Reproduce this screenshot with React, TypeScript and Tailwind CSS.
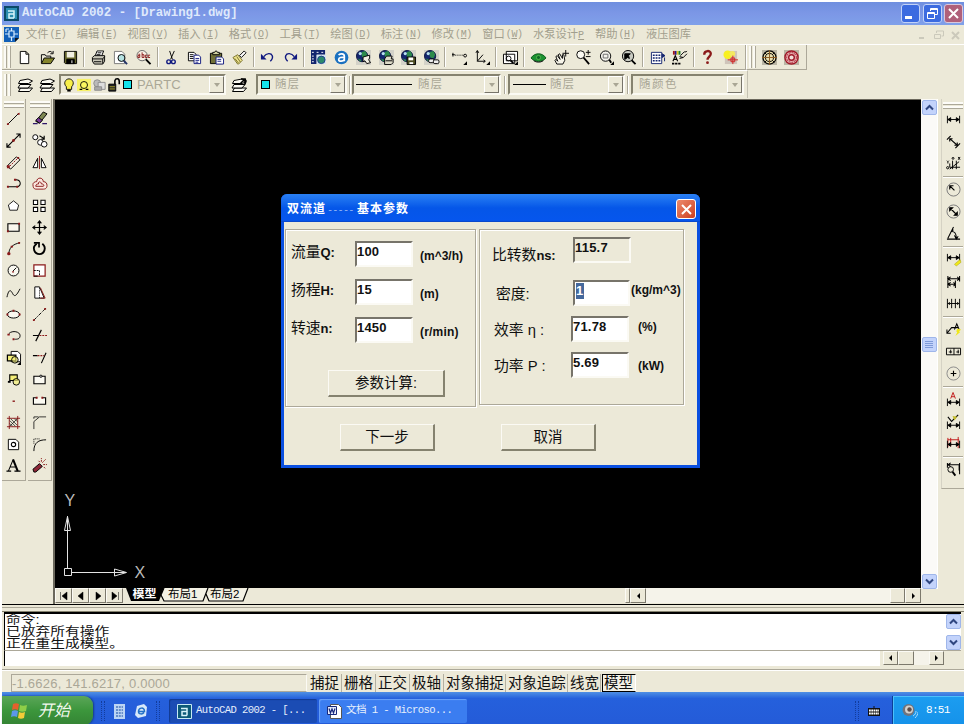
import type { ReactNode } from 'react';
import clsx from 'clsx';

const SONG = "font-['Liberation_Mono','Noto_Sans_CJK_SC',monospace]";
const HEI = "font-['Liberation_Sans','Noto_Sans_CJK_SC',sans-serif]";

function Icon({ children, size = 16 }: { children: ReactNode; size?: number }) {
  return (
    <svg
      width={size}
      height={size}
      viewBox="0 0 16 16"
      fill="none"
      stroke="#000"
      strokeWidth="1"
      className="shrink-0 overflow-visible"
    >
      {children}
    </svg>
  );
}

const R = '#8b1a1a';

// small filled corner marking a flyout button
const Flyout = () => <path d="M16 12v4h-4z" fill="#000" stroke="none" />;

const Globe = () => (
  <>
    <path d="M0 0h16v16h-16z" fill="#d3d2c8" stroke="none" />
    <circle cx="6.5" cy="6.5" r="6" fill="#14266e" stroke="#0c1640" />
    <path d="M6 2l4-1 2 4-2 4-3-1-1-2zM2 9l3 1 1 2-2 0z" fill="#2c8a4c" stroke="none" />
    <circle cx="4.5" cy="3.8" r="1.7" fill="#b8e0f0" stroke="none" />
  </>
);

const standardGroups: ReactNode[][] = [
  [
    <path d="M3.5 1.5h6l3 3v10h-9zM9.5 1.5v3h3" fill="#fff" />,
    <>
      <path d="M1.5 14v-9h4l1 1.5h5v2M8 3c2-2 4-2 5 0M14 1v3h-3" />
      <path d="M1.5 14.5l3-6h11l-4 6z" fill="#84842c" />
    </>,
    <>
      <path d="M1.5 1.5h13v13h-12l-1-1z" fill="#66662c" />
      <path d="M4 2h8v6h-8z" fill="#f2f0e2" stroke="none" />
      <path d="M4 10h8v4.5h-8z" fill="#000" />
      <path d="M9.5 11v3" stroke="#fff" />
    </>,
  ],
  [
    <>
      <path d="M4.5 6l2-5h7l-2 5" fill="#fff" />
      <path d="M1.5 8l2-2h11v6l-2 3h-9l-2-3z" fill="#c9c7b8" />
      <path d="M1.5 9.5h11v5M3 12.5h8M7 3h4M6 5h4M12.5 9.5l2-2.5" />
    </>,
    <>
      <path d="M1.5 1.5h8l3 3v10h-11z" fill="#fff" stroke="#777" />
      <circle cx="9" cy="8.5" r="3.7" fill="#b5e2e2" />
      <path d="M11.5 11.5l3.5 3.5" strokeWidth="2" stroke="#236" />
    </>,
    <>
      <circle cx="6.5" cy="6" r="5.5" fill="#f8f0e4" stroke="#666" />
      <path d="M10.5 10l5 5" strokeWidth="2" />
      <path d="M2.5 4.500h1.500v3.500h-2v-2h2M6.500 2.500v5.500h2v-3h-2M12 5.500h-2v2.500h2M15 5.500h-2v2.500h2" stroke={R} />
    </>,
  ],
  [
    <>
      <path d="M6 1l3 9M11 1l-4 9" />
      <circle cx="5" cy="12.5" r="2" stroke="#111a80" strokeWidth="1.5" />
      <circle cx="10" cy="12.5" r="2" stroke="#111a80" strokeWidth="1.5" />
    </>,
    <>
      <path d="M1.5 2.5h6l2 2v7h-8z" fill="#fff" />
      <path d="M3 5h4M3 7h4M3 9h4" />
      <path d="M7.5 5.5h5l2 2v7h-7z" fill="#fff" stroke="#111a80" />
      <path d="M9 9h4M9 11h4M9 13h3" stroke="#111a80" />
    </>,
    <>
      <path d="M1.5 3.5h12v11h-12z" fill="#707038" />
      <path d="M4 2.5h2l1-1.5h1l1 1.5h2v2.5h-7z" fill="#cfcfa0" />
      <path d="M7.5 7.5h6l2 2v5.5h-8z" fill="#fff" stroke="#111a80" />
      <path d="M9 10h4M9 12h4" stroke="#111a80" />
    </>,
    <>
      <path d="M1 8l5-3 5 6-4 4h-1z" fill="#efe58e" stroke="#77702a" />
      <path d="M3 9l4 5M5 7l4 6" stroke="#77702a" />
      <path d="M8 6l5-5 2 2-5 5z" fill="#fff" />
    </>,
  ],
  [
    <>
      <path d="M4 7c3-4 8-4 9-1c1 2 0 4-2 6" stroke="#111a80" strokeWidth="1.5" />
      <path d="M1 4v6h6z" fill="#111a80" stroke="none" />
    </>,
    <>
      <path d="M12 7c-3-4-8-4-9-1c-1 2 0 4 2 6" stroke="#111a80" strokeWidth="1.5" />
      <path d="M15 4v6h-6z" fill="#111a80" stroke="none" />
    </>,
  ],
  [
    <>
      <path d="M0 0h15v5h-9v10h-6z" fill="#13246e" stroke="none" />
      <path d="M1 2.5h3M6 2.5h3M1 6.5h3M1 9.5h3M1 12.5h3M11 2.5h3" stroke="#fff" strokeDasharray="2 1" />
      <path d="M6 5h10v10h-10z" fill="#d4e4f0" stroke="none" />
      <circle cx="11" cy="10.5" r="4" fill="#2c8a6c" stroke="#1d3d8c" />
    </>,
    <>
      <circle cx="8" cy="8" r="7.3" fill="#1a71c0" stroke="none" />
      <path d="M5 5.500c1-2 6-2 6 1v5.500M11 8c-3-.5-6 0-6 2c0 2.500 5 2.500 6 0" stroke="#fff" strokeWidth="1.800" />
    </>,
    <>
      <Globe />
      <path d="M7.5 7.5l7-2v3l-1 2 2 3-4 1-2-3-2 1z" fill="#f1efe2" />
    </>,
    <>
      <Globe />
      <path d="M6 9.5l2-3h6l-1 3h2v4l-2 2h-7z" fill="#dddbc8" />
      <path d="M7 11.5h7" />
    </>,
    <>
      <Globe />
      <path d="M6.5 7.5h9v8h-9z" fill="#4c4c20" />
      <path d="M8 8h5v3h-5z" fill="#fff" stroke="none" />
      <path d="M9 13h4v2h-4z" fill="#fff" stroke="none" />
    </>,
    <>
      <Globe />
      <rect x="5" y="9.5" width="6" height="4" rx="1.5" fill="#eee" />
      <rect x="10" y="10.5" width="6" height="4" rx="1.5" fill="#eee" />
    </>,
  ],
  [
    <>
      <path d="M1 3v4M0 5h3" />
      <path d="M3 5.5h9" strokeDasharray="1 1" />
      <circle cx="14" cy="6" r="1.5" />
      <Flyout />
    </>,
    <>
      <path d="M2.5 1v11h8M2.5 12l6-7M1 3l1.5-2.5 1.5 2.5M9 10.5l2 1.5-2 1.5" />
      <Flyout />
    </>,
  ],
  [
    <>
      <path d="M3.5 1.5h12v10h-12zM.5 4.5h12v10h-12z" fill="#fff" />
      <circle cx="6" cy="9" r="2.5" />
      <path d="M8 11l3 3" strokeWidth="2" />
      <Flyout />
    </>,
  ],
  [
    <>
      <path d="M0 8.5c4-6 12-6 16 0c-4 5-12 5-16 0z" fill="#1c9232" stroke="#0b5818" />
      <path d="M3 11.500c3 2 7 2 10 0" stroke="#111" />
      <circle cx="8" cy="8" r="2.200" fill="#0d6a24" stroke="#7fd060" strokeWidth=".6" />
    </>,
    <>
      <path d="M3 15l-2-4 1-1 2 2-2-5 1.5-1 3 4-2-5 1.5-1 3 5 0-4 1.5 0 1 6-2 4z" fill="#f7f5ea" />
      <path d="M12.5 0v7M9 3.5h7" />
    </>,
    <>
      <circle cx="5" cy="5" r="4.200" fill="#fbfaf2" />
      <path d="M8 8l6 7" strokeWidth="2" />
      <path d="M13 0v5M10.500 2.500h5M10.500 7h5" />
    </>,
    <>
      <circle cx="7" cy="6.5" r="5.5" fill="#f4f3ec" />
      <path d="M4.5 4.5h5v4h-5z" stroke="#666" />
      <path d="M11 10.500l2 3" strokeWidth="2" />
      <Flyout />
    </>,
    <>
      <circle cx="7.5" cy="6.5" r="6" fill="#c9cbc2" />
      <path d="M4 10v-6l6 0-2 2 1 3-2-1z" fill="#000" />
      <path d="M11.500 11l4 4" strokeWidth="2" />
    </>,
  ],
  [
    <>
      <path d="M1.5 2.5h11v12h-11z" fill="#fff" stroke="#13246e" />
      <path d="M3 5.5h8M3 8.5h8M3 11.5h8" stroke="#13246e" strokeWidth="1.600" strokeDasharray="2 1" />
      <path d="M13 4l3 2-3 2zM15.5 8v4" fill="#13246e" stroke="#13246e" />
    </>,
    <>
      <path d="M1 1h2v4h-2z" fill="#a01616" stroke="none" />
      <path d="M3 1h2v4h-2z" fill="#2a1690" stroke="none" />
      <path d="M5 1h2v4h-2z" fill="#d8c820" stroke="none" />
      <path d="M7 1h2v4h-2z" fill="#1b7b2c" stroke="none" />
      <path d="M1 12l2.500-6 2.500 6M2 10h3.500" strokeWidth="1.200" />
      <path d="M9 6l4-4 2 0 1-1M8 9l4-1 4-4M8 7l4 1" />
      <path d="M0 14.5h9" strokeWidth="2" strokeDasharray="2.500 .8" />
    </>,
  ],
  [
    <>
      <path d="M4.5 5c0-5 7-5 7-1c0 3-3.5 3-3.5 6.5" stroke={R} strokeWidth="2.5" />
      <circle cx="8" cy="13.5" r="1.5" fill={R} stroke="none" />
    </>,
    <>
      <path d="M2 1h13v14h-13z" fill="#cfc5ba" stroke="none" />
      <circle cx="5" cy="5" r="4.5" fill="#f8f020" stroke="none" />
      <circle cx="10" cy="4" r="3" fill="#f4e860" stroke="none" />
      <path d="M8.5 8.5h4v4h-4zM10.5 6v9M5 10.5h11" stroke="#d02020" />
    </>,
  ],
];

const drawIcons: ReactNode[] = [
  <>
    <path d="M2 14l12-12" />
    <path d="M1 13h2v2h-2zM12.5 2h2v2h-2z" fill={R} stroke="none" />
  </>,
  <>
    <path d="M1 15l14-14M1 11v4h4M11 1h4v4" strokeWidth="1.2" />
    <circle cx="8" cy="8" r="1.5" fill={R} stroke="none" />
  </>,
  <>
    <path d="M1 12l10-10 4 3-10 10z" fill="#f3ede0" />
    <path d="M4 12l8-8" stroke={R} strokeDasharray="2 1" />
    <path d="M1 11h3v3h-3zM12 2h2v2h-2z" fill={R} stroke="none" />
  </>,
  <>
    <path d="M2 11.500h10c5-1 4-8-2-7.500" strokeWidth="1.1" />
    <path d="M1 10.500h2v2h-2zM11 10.500h2v2h-2zM8.500 3h2.500v2h-2.500z" fill={R} stroke="none" />
  </>,
  <path d="M8 3l5.5 4.500-1.5 5.500h-8l-1.500-5.500z" fill="#fff" strokeWidth=".9" />,
  <>
    <path d="M2 4h12v8h-12z" fill="#faf7ee" strokeWidth="1.2" />
    <path d="M1 11h2v2h-2zM13 3h2v2h-2z" fill={R} stroke="none" />
  </>,
  <>
    <path d="M3 14c0-6 4-11 12-12" />
    <circle cx="3" cy="13.5" r="1.8" fill={R} stroke="none" />
    <path d="M5 5h2.5v2h-2.5zM13 1h2v2h-2z" fill={R} stroke="none" />
  </>,
  <>
    <circle cx="8" cy="8" r="5.8" fill="#f8f7ef" />
    <path d="M6.5 9.5h2" stroke={R} strokeWidth="1.500" />
    <path d="M7.500 8.500l3.500-3.500" />
  </>,
  <path d="M1 13c2-9 4-8 6-4s4 3 8-5" />,
  <>
    <ellipse cx="8" cy="8" rx="6.5" ry="3.8" fill="#faf8f0" />
    <path d="M.5 7h2v2h-2zM7 3h2v2h-2zM13.5 7h2v2h-2z" fill={R} stroke="none" />
  </>,
  <>
    <path d="M3 6c4-4 12-2 12 2s-3 4-6 4" />
    <path d="M1.5 6h2.5v2h-2.5zM7 11h2v2h-2z" fill={R} stroke="none" />
  </>,
  <>
    <path d="M5.5 1.5h7l3 3v8h-10z" fill="#fff" />
    <path d="M1.5 5.5h9v6h-9z" fill="#f4ee78" strokeWidth="1.3" />
    <circle cx="9.500" cy="10.500" r="3.500" fill="#f4ee78" fillOpacity=".6" />
    <Flyout />
  </>,
  <>
    <path d="M4 3h8v6h-8z" fill="#f4ee78" strokeWidth="1.2" />
    <circle cx="11" cy="10.5" r="3.5" fill="#f4ee78" fillOpacity=".7" />
    <path d="M2 10.5h3" strokeWidth="2" />
  </>,
  <path d="M7 8h2.5v1.5h-2.5z" fill={R} stroke="none" />,
  <>
    <path d="M1 3.5h14M1 12.5h14M3.5 1v14M12.5 1v14" stroke={R} />
    <path d="M4 6l6 6M4 9l3 3M5 4l7 7M9 4l3 3M4 12l8-8" strokeWidth=".7" />
  </>,
  <>
    <path d="M2.5 2.5h8l3 3v8h-11z" fill="#fff" />
    <circle cx="8" cy="8" r="2.3" strokeWidth="1.2" />
  </>,
  <>
    <path d="M2.500 14l5-12M4 9.500h6M.5 14h5M9 14h6.500" strokeWidth="1.100" />
    <path d="M7.500 1.500l5 12.500" strokeWidth="2.200" />
  </>,
];

const modifyIcons: ReactNode[] = [
  <>
    <path d="M4 11l8-10 4 2-8 10z" fill="#7d8750" />
    <path d="M4 10l3-3 4 3-3 3z" fill="#7b3c9a" />
    <path d="M1 13.5h5M11 13.5h5" stroke="#31186a" strokeWidth="1.5" />
  </>,
  <>
    <circle cx="3.5" cy="4.5" r="2.7" fill="#fff" />
    <circle cx="9" cy="10" r="3" fill="#fff" />
    <circle cx="13" cy="12" r="3" fill="#fff" />
    <path d="M8 3l5 3M13 3v3.5h-3" strokeWidth="1.2" />
  </>,
  <>
    <path d="M1 13.5h5v-10zM10 13.5h5l-5-10z" fill="#fff" />
    <path d="M8 1v14" stroke={R} />
  </>,
  <>
    <path d="M1 9c0-2 2-3 4-3c0-5 7-5 7 0c3 0 4 2 4 4c0 4-3 4-4 4h-8c-2 0-3-2-3-5z" fill="#fbe8e0" stroke={R} />
    <path d="M4 11c0-2.500 2-2.500 3-2.500c-1-3 3-3 3 0c3-.5 3 2.500 2 2.500z" stroke={R} />
  </>,
  <path d="M1.5 2.5h4.500v4.500h-4.500zM9.500 2.500h4.500v4.500h-4.500zM1.500 10h4.500v4.500h-4.500zM9.500 10h4.500v4.500h-4.500z" fill="#fff" strokeWidth="1.1" />,
  <path d="M8 1v14M1 8h14M6 3.5l2-2.5 2 2.5M6 12.5l2 2.5 2-2.5M3.5 6l-2.5 2 2.5 2M12.5 6l2.5 2-2.5 2" strokeWidth="1.3" />,
  <>
    <path d="M5 3c-6 4-2 11 3 11s8-7 3-11" strokeWidth="2" />
    <path d="M2 2h5.500v5" strokeWidth="1.8" />
  </>,
  <>
    <path d="M2 2h12v12h-12z" fill="#fff" stroke={R} strokeWidth="1.3" />
    <path d="M2 8h6v6" strokeDasharray="2 1" />
    <path d="M2 14h4" />
  </>,
  <>
    <path d="M3 2h5l5 12h-10z" fill="#fff" />
    <path d="M8 3v11" strokeDasharray="1 1" />
    <path d="M9 3l5 11h-5" stroke={R} />
  </>,
  <>
    <path d="M2 14l12-12" strokeDasharray="4 1 1 1" />
    <path d="M1 13h2v2h-2zM13 1h2v2h-2z" fill={R} stroke="none" />
  </>,
  <>
    <path d="M1 8h6M4 14l6-12" strokeWidth="1.2" />
    <path d="M8 8h8" stroke={R} strokeDasharray="2 1" strokeWidth="1.3" />
  </>,
  <>
    <path d="M1 6h5M10 14l5-11" strokeWidth="1.2" />
    <path d="M6 6h7" stroke={R} strokeDasharray="2 1" strokeWidth="1.3" />
  </>,
  <>
    <path d="M2 4.500h12v8h-12z" fill="#fbfaf2" strokeWidth="1.2" />
    <circle cx="9.500" cy="4.500" r="1.200" fill="#fff" />
  </>,
  <>
    <path d="M5 5h-3.5v7h13v-7h-3.5" fill="#fbfaf2" strokeWidth="1.2" />
    <path d="M4 4h2v2h-2zM10 4h2v2h-2z" fill={R} stroke="none" />
  </>,
  <path d="M2 15v-8l6-5h7M2 4v-2h5" strokeWidth=".8" />,
  <>
    <path d="M2 15c0-9 5-12 13-12" />
    <path d="M2 7v-5h7" strokeDasharray="1 1" />
  </>,
  <>
    <path d="M1 12l7-6 3 3-7 6h-2z" fill="#8c2636" />
    <path d="M11 5l4-4M12 7h4M10 4v-4M7 3l2 2M14 11l-2-2" stroke={R} strokeDasharray="2 1" />
  </>,
];

const DimArrow = ({ y = 8 }: { y?: number }) => (
  <path
    d={`M1.5 ${y - 4}v8M14.5 ${y - 4}v8M2 ${y}h12M5 ${y - 2}l-3 2 3 2zM11 ${y - 2}l3 2-3 2z`}
    fill="#000"
  />
);

const dimensionGroups: ReactNode[][] = [
  [
    <DimArrow />,
    <path d="M1 6l4-4M10 15l5-5M4 5l8 7M4 8v-3h3M12 9v3h-3" strokeWidth="1.2" />,
    <>
      <path d="M4 8v4h11M7 5v9M11 5v9M4 14l10-8" />
      <path d="M1 5l1 1 1-1M2 6v2M13 1l2 3M15 1l-2 3" />
      <circle cx="7.5" cy="2.5" r="1" />
      <circle cx="1.8" cy="12.5" r="1.2" />
    </>,
  ],
  [
    <>
      <circle cx="8" cy="8" r="7" stroke="#777" />
      <path d="M4 4l5 5M4 8v-4h4" strokeWidth="1.2" />
    </>,
    <>
      <circle cx="8" cy="8" r="7" stroke="#777" />
      <path d="M4 4l8 8M4 7v-3h3zM12 9v3h-3z" strokeWidth="1.2" fill="#000" />
    </>,
    <path d="M1 14h14M2 13l6-12M5 6c4-1 6 2 6 7M5 6l3-2M9 10l2 4 2-3" strokeWidth="1.1" />,
  ],
  [
    <>
      <DimArrow y={6} />
      <path d="M15 8l-6 5 2 2 5-4z" fill="#f0e818" stroke="#a09a10" strokeWidth=".5" />
    </>,
    <path d="M2 2v13M10 7v8M14.500 2v6M2 5h12M2 11h8M5 3l-3 2 3 2M12 3l2 2-2 2M5 9l-3 2 3 2M8 9l2 2-2 2" strokeWidth="1.1" />,
    <path d="M1.5 3v10M6 3v10M10 3v10M14.5 3v10M2 8h12M4 6.5L2.5 8 4 9.5M12 6.5L13.5 8 12 9.5" />,
  ],
  [
    <>
      <path d="M1 12l5-6h4M1 8v4h4" strokeWidth="1.1" />
      <path d="M9 8l2.5-6 2.5 6M10 6h3" strokeWidth="1.1" />
      <path d="M12 7l4 1-2 2 1 1-5 4 2-4-1-1z" fill="#f0e818" stroke="none" />
    </>,
    <path d="M.5 4.500h15v7h-15zM8.500 4.500v7M3 8.500h3.500M5 6v4M11 8.500h3M13 6v4" />,
    <>
      <circle cx="8" cy="8" r="7" stroke="#888" />
      <path d="M8 5v6M5 8h6" strokeWidth="1.2" />
    </>,
  ],
  [
    <>
      <path d="M5 7l2.5-6.5 2.5 6.5M6 5h3" stroke="#c01818" />
      <DimArrow y={11} />
    </>,
    <>
      <path d="M2 3l4 5 7-7" strokeWidth="1.2" />
      <path d="M7 2l5 1-3 4z" fill="#c4bc28" stroke="none" />
      <DimArrow y={12} />
    </>,
    <>
      <path d="M2 2v10M13 1v12M5 2v9M2 4h12" stroke="#c01818" />
      <DimArrow y={9} />
    </>,
  ],
  [
    <>
      <path d="M2 3h12v6M1.5 1v5M14.5 1v12M5 1L2 3l3 2" strokeWidth="1.1" />
      <circle cx="5" cy="8" r="3" />
      <path d="M7 10.500l3 4" strokeWidth="2" />
    </>,
  ],
];

const pumpIcons: ReactNode[] = [
  <>
    <path d="M0 0h16v16h-16z" fill="#b9b5a4" stroke="none" />
    <circle cx="8" cy="8" r="7" fill="#eadfae" strokeWidth="1.3" />
    <circle cx="8" cy="8" r="4.3" />
    <path d="M8 0v16M0 8h16" stroke="#8a5a20" />
    <path d="M3 3l2 2M13 3l-2 2M3 13l2-2M13 13l-2-2" />
  </>,
  <>
    <path d="M0 0h16v16h-16z" fill="#b9b5a4" stroke="none" />
    <circle cx="8" cy="8" r="7" fill="#e9b4b4" stroke="#a01828" strokeWidth="1.5" />
    <circle cx="8" cy="8" r="3" stroke="#a01828" strokeWidth="1.5" fill="#f0e0da" />
    <circle cx="8" cy="8" r="5.2" stroke="#a01828" strokeDasharray="2 1" />
  </>,
];

const LayerStack = () => (
  <>
    <path d="M3.500 11l12 0-3 3.500h-11z" fill="#fbfaf2" />
    <path d="M3 7.500h11l-3 3.500h-10z" fill="#fbfaf2" />
    <path d="M3 3.500l8-1.500 4.500 2-4 2.500h-10z" fill="#fbfaf2" />
  </>
);

function Sep({ vertical = false }: { vertical?: boolean }) {
  return vertical ? (
    <div className="mx-auto my-[1.3px] h-[2px] w-[20px] border-t border-[#aca899] bg-white" />
  ) : (
    <div className="mx-[1.85px] h-[20px] w-[2px] border-l border-[#aca899] bg-white" />
  );
}

function Grip() {
  return (
    <div className="flex h-[22px] shrink-0 gap-[1px]">
      <div className="w-[3px] border-r border-[#aca899] bg-[#fbfaf4]" />
      <div className="w-[3px] border-r border-[#aca899] bg-[#fbfaf4]" />
    </div>
  );
}

function GripBar() {
  return (
    <div className="mx-auto flex w-[20px] flex-col gap-[1px] pt-[2px]">
      <div className="h-[3px] border-b border-[#aca899] bg-[#fdfcf8]" />
      <div className="h-[3px] border-b border-[#aca899] bg-[#fdfcf8]" />
    </div>
  );
}

function Combo({ width, children }: { width: string; children: ReactNode }) {
  return (
    <div
      className={clsx(
        'flex h-[21px] shrink-0 items-center border-2 border-t-[#85826f] border-l-[#85826f] border-r-[#fbfaf3] border-b-[#fbfaf3] text-[11.5px] text-[#aaa796]',
        HEI,
        width,
      )}
    >
      <div className="flex min-w-0 flex-1 items-center">{children}</div>
      <div className="flex h-[17px] w-[15px] items-center justify-center border border-t-white border-l-white border-r-[#77746a] border-b-[#77746a]">
        <div className="border-x-[3.5px] border-t-[4px] border-x-transparent border-t-[#a9a695]" />
      </div>
    </div>
  );
}

function ToolColumn({ icons }: { icons: ReactNode[] }) {
  return (
    <div className="h-[382px] w-[24px] border-r border-b border-[#aca899]">
      <GripBar />
      {icons.map((icon, i) => (
        <div key={i} className="flex h-[21.7px] items-center justify-center">
          <Icon size={15}>{icon}</Icon>
        </div>
      ))}
    </div>
  );
}

const menus = [
  ['文件', 'F'], ['编辑', 'E'], ['视图', 'V'], ['插入', 'I'], ['格式', 'O'], ['工具', 'T'],
  ['绘图', 'D'], ['标注', 'N'], ['修改', 'M'], ['窗口', 'W'],
];

function TitleBar() {
  return (
    <div className="flex h-[23px] items-center bg-linear-to-b from-[#6f8fdf] via-[#7c97e6] to-[#7fa0ea] pr-[1px] pl-[2px]">
      <svg width="15" height="15" viewBox="0 0 15 15">
        <path d="M0 0h15v15h-15z" fill="#0b4a68" />
        <path d="M2 2h11v11h-11z" fill="#2a8db0" />
        <path d="M4 5h6v7M10 8h-5v4h5" fill="none" stroke="#d8f4fa" strokeWidth="1.5" />
      </svg>
      <span className={clsx('ml-[3px] text-[12.4px] font-bold whitespace-pre text-[#dfe9fb]', SONG)}>
        AutoCAD 2002 - [Drawing1.dwg]
      </span>
      <div className="ml-auto flex gap-[2.5px]">
        <div className="flex size-[19px] items-end rounded-[3px] border border-[#c3d3f7] bg-[#3c6be0] p-[3px]">
          <div className="h-[3px] w-[7px] bg-white" />
        </div>
        <div className="flex size-[19px] items-center justify-center rounded-[3px] border border-[#c3d3f7] bg-[#3c6be0]">
          <svg width="11" height="11" viewBox="0 0 11 11" fill="none" stroke="#fff">
            <path d="M3.5 3v-2.5h7v6h-2.5M3.5 1.5h7M.5 4.5h7v6h-7zM.5 5.5h7" />
          </svg>
        </div>
        <div className="flex size-[19px] items-center justify-center rounded-[3px] border border-[#d9c8dc] bg-[#b0607a]">
          <svg width="11" height="11" viewBox="0 0 11 11" stroke="#fff" strokeWidth="2">
            <path d="M1 1l9 9M10 1l-9 9" />
          </svg>
        </div>
      </div>
    </div>
  );
}

function MenuBar() {
  return (
    <div className={clsx('flex h-[19px] items-center pl-[2px] text-[11.3px] text-[#a29f8e]', HEI)}>
      <svg width="15" height="15" viewBox="0 0 15 15" className="mr-[7px]">
        <path d="M0 0h15v11l-4 4h-11z" fill="#1360b8" />
        <path d="M1 7h4M10 7h4M7.500 1v3M7.500 10v4M5 4h5v6h-5zM2 2h3M2 2v3" fill="none" stroke="#d6ecff" strokeWidth="1.2" />
        <path d="M11 15v-4h4z" fill="#101820" />
      </svg>
      {menus.map(([label, key]) => (
        <div key={key} className="flex w-[50.7px] shrink-0 items-center whitespace-nowrap">
          {label}
          <span className="ml-[1px] font-['Liberation_Mono'] text-[10px] tracking-[-0.4px]">
            (<u>{key}</u>)
          </span>
        </div>
      ))}
      <div className="w-[62px] shrink-0 whitespace-nowrap">
        水泵设计<u className="font-['Liberation_Mono'] text-[10px]">P</u>
      </div>
      <div className="flex w-[51px] shrink-0 items-center whitespace-nowrap">
        帮助
        <span className="ml-[1px] font-['Liberation_Mono'] text-[10px] tracking-[-0.4px]">
          (<u>H</u>)
        </span>
      </div>
      <div className="shrink-0">液压图库</div>
      <svg width="42" height="10" viewBox="0 0 42 10" className="mr-[3px] ml-auto" fill="none" stroke="#cbc9bb">
        <path d="M0 8h5" strokeWidth="2" />
        <path d="M17.5 3v-2h7v5h-2M15.5 4.5h6v4h-6z" />
        <path d="M33 2l7 7M40 2l-7 7" strokeWidth="2" />
      </svg>
    </div>
  );
}

function StandardToolbar() {
  return (
    <div className="flex h-[26px] items-center border-t border-white">
      <div className="flex h-[25px] w-[744px] items-center border-r border-b border-[#aca899] pl-[2px]">
        <Grip />
        <div className="ml-[2.7px] flex items-center">
          {standardGroups.map((group, g) => (
            <div key={g} className="flex items-center">
              {g > 0 && <Sep />}
              {group.map((icon, i) => (
                <div key={i} className="flex w-[22.57px] justify-center">
                  <Icon size={15}>{icon}</Icon>
                </div>
              ))}
            </div>
          ))}
        </div>
      </div>
      <div className="flex h-[25px] w-[61px] items-center border-r border-b border-l border-[#aca899] border-l-white pl-[2px]">
        <Grip />
        <div className="ml-[6px] flex gap-[7px]">
          {pumpIcons.map((icon, i) => (
            <Icon key={i} size={15}>
              {icon}
            </Icon>
          ))}
        </div>
      </div>
    </div>
  );
}

function PropertiesToolbar() {
  return (
    <div className="flex h-[28px] items-center">
      <div className="flex h-[28px] w-[746px] items-center border-t border-r border-white border-r-[#c4c1b2] pl-[2px]">
        <Grip />
        <div className="ml-[6px] flex w-[42px] gap-[6px]">
          <Icon><LayerStack /></Icon>
          <Icon><LayerStack /></Icon>
        </div>
        <Combo width="w-[167px]">
          <div className="flex items-center gap-[1px] pl-[1px]">
            <Icon size={14}>
              <path d="M5 10c-4-4-1-9 3-9s7 5 3 9v3h-6z" fill="#f7ef4a" />
              <path d="M6 14.5h4" strokeWidth="2" />
            </Icon>
            <Icon size={14}>
              <path d="M0 1h16v14h-16z" fill="#f8f268" stroke="none" />
              <circle cx="8" cy="8" r="4" fill="#fbf75f" />
              <path d="M3 13h3M10 13h3" strokeWidth="1.5" />
            </Icon>
            <Icon size={14}>
              <circle cx="6" cy="6" r="4" fill="#bbb" stroke="#888" />
              <path d="M7 5h8v8h-8z" fill="#ddd" stroke="#888" />
              <path d="M3 10h8v4h-8z" fill="#aaa" stroke="#888" />
            </Icon>
            <Icon size={14}>
              <path d="M2 7h8v8h-8z" fill="#222" />
              <path d="M3 10h6M3 12.5h6" stroke="#b8b030" />
              <path d="M9 7v-4c1-3 5-3 5 1v3" strokeWidth="1.800" />
            </Icon>
            <div className="ml-[1px] size-[9px] border border-black bg-[#14e4ec]" />
          </div>
          <span className="ml-[5px] text-[13px] tracking-[0.2px]">PARTC</span>
        </Combo>
        <div className="mr-[9px] ml-[5px]">
          <Icon>
            <LayerStack />
            <path d="M9 7l4-4M14 6v-4h-4M14 2c1 2 1 4-1 6" strokeWidth="1.700" />
          </Icon>
        </div>
        <Combo width="w-[91px]">
          <div className="ml-[3px] size-[9px] border border-black bg-[#14e4ec]" />
          <span className="ml-[5px] tracking-[1px]">随层</span>
        </Combo>
        <div className="mx-[1.5px] h-[18px] w-[2px] border-l border-[#aca899] bg-white" />
        <Combo width="w-[149px]">
          <div className="ml-[2px] h-px w-[56px] bg-black" />
          <span className="ml-[6px] tracking-[1px]">随层</span>
        </Combo>
        <div className="mx-[2.5px] h-[18px] w-[2px] border-l border-[#aca899] bg-white" />
        <Combo width="w-[117px]">
          <div className="ml-[3px] h-px w-[33px] bg-black" />
          <span className="ml-[4px] tracking-[1px]">随层</span>
        </Combo>
        <div className="mx-[2px] h-[18px] w-[2px] border-l border-[#aca899] bg-white" />
        <Combo width="w-[113px]">
          <span className="ml-[6px] tracking-[1.5px]">随颜色</span>
        </Combo>
      </div>
    </div>
  );
}

function LunaArrow({ up = false }: { up?: boolean }) {
  return (
    <div className="flex size-[15px] items-center justify-center rounded-[2px] border border-[#9fb6ea] bg-[#c3d3fb]">
      <svg width="9" height="7" viewBox="0 0 9 7" fill="none" stroke="#2f4680" strokeWidth="2">
        <path d={up ? 'M1 5.5l3.5-3.5 3.5 3.5' : 'M1 1.5l3.5 3.5 3.5-3.5'} />
      </svg>
    </div>
  );
}

function ClassicButton({ className, children }: { className: string; children?: ReactNode }) {
  return (
    <div
      className={clsx(
        'flex shrink-0 items-center justify-center border border-t-[#fbfaf4] border-l-[#fbfaf4] border-r-[#7c796c] border-b-[#7c796c] bg-[#ece9d8]',
        className,
      )}
    >
      {children}
    </div>
  );
}

const LeftTri = () => <div className="border-y-[3px] border-r-[3px] border-y-transparent border-r-black" />;
const RightTri = () => <div className="border-y-[3px] border-l-[3px] border-y-transparent border-l-black" />;

// axes marker in the lower left of the model space
function UcsMarker() {
  return (
    <svg width="110" height="100" viewBox="0 0 110 100" fill="none" stroke="#e4e4e4">
      <path d="M9.5 80.5h7v7h-7zM12.5 80v-52M9.5 42.5l3-14 3 14zM17 84.5h54M59.5 81l12 3.5-12 3.5z" />
      <text x="9.5" y="18" className="font-['Liberation_Sans'] text-[16px]" fill="#bbb" stroke="none">Y</text>
      <text x="79.5" y="90" className="font-['Liberation_Sans'] text-[16px]" fill="#bbb" stroke="none">X</text>
    </svg>
  );
}

function LayoutTabs() {
  return (
    <div className="flex h-[15px] overflow-hidden">
      {['M4.5 2v8M11 2v8l-5-4z', 'M10 2v8l-5-4z', 'M6 2v8l5-4z', 'M11.5 2v8M5 2v8l5-4z'].map((d, i) => (
        <ClassicButton key={i} className="h-[15px] w-[17px]">
          <svg width="15" height="12" viewBox="0 0 15 12" stroke="#000" strokeWidth=".5">
            <path d={d} />
          </svg>
        </ClassicButton>
      ))}
      <svg width="126" height="15" viewBox="0 0 126 15" className={clsx('ml-[3px]', HEI)}>
        <path d="M0 0l5 13h28l5-13z" fill="#000" />
        <path d="M38 0l-3 7 3 6h39l5-13M80 6l3 7h34l5-13" fill="#f3f1e4" stroke="#000" strokeWidth="1.2" />
        <text x="6.5" y="10" fill="#fff" className="text-[12px] font-bold">模型</text>
        <text x="42" y="10" className="text-[11.5px]">布局1</text>
        <text x="84" y="10" className="text-[11.5px]">布局2</text>
      </svg>
      <div className="ml-auto flex">
        <ClassicButton className="w-[5px]" />
        <ClassicButton className="w-[16px]">
          <LeftTri />
        </ClassicButton>
        <div className="w-[244px] bg-[#f5f3ea]" />
        <ClassicButton className="w-[15px]" />
        <ClassicButton className="w-[16px]">
          <RightTri />
        </ClassicButton>
      </div>
    </div>
  );
}

function Workspace() {
  return (
    <div className="flex h-[506px] pt-px">
      <div className="flex gap-[2px] pr-[1px]">
        <ToolColumn icons={drawIcons} />
        <ToolColumn icons={modifyIcons} />
      </div>
      <div className="flex w-[868px] flex-col border-t border-l-2 border-[#6b685c]">
        <div className="flex h-[488px] items-end bg-black">
          <UcsMarker />
        </div>
        <LayoutTabs />
      </div>
      <div className="flex h-[490px] w-[17px] flex-col items-center border-r border-white bg-[#fbfaf7] pt-[1px]">
        <LunaArrow up />
        <div className="mt-[222px] flex size-[15px] flex-col items-center justify-center gap-[1px] rounded-[2px] border border-[#9fb6ea] bg-[#c3d3fb]">
          {[0, 1, 2, 3].map((i) => (
            <div key={i} className="h-px w-[8px] bg-[#7f9ad8]" />
          ))}
        </div>
        <div className="mt-auto">
          <LunaArrow />
        </div>
      </div>
      <div className="ml-[3px] h-[390px] flex-1 border-b border-l border-[#aca899] border-l-[#d5d2c4] pt-px">
        <GripBar />
        {dimensionGroups.map((group, g) => (
          <div key={g}>
            {g > 0 && <Sep vertical />}
            {group.map((icon, i) => (
              <div key={i} className="flex h-[21.8px] items-center justify-center">
                <Icon size={15}>{icon}</Icon>
              </div>
            ))}
          </div>
        ))}
      </div>
    </div>
  );
}

function CommandWindow() {
  return (
    <div className="flex h-[70px] flex-col border-t border-black pt-[2px]">
      <div className="h-[5px] border-y border-t-[#aca899] border-b-[#85826f]" />
      <div className="ml-[2px] flex h-[39px] w-[957px] border-t-2 border-l border-black border-b border-b-[#aca899] bg-white">
        <div className={clsx('flex-1 pl-px text-[12px] leading-[12px] text-[#111]', HEI)}>
          {['命令:', '已放弃所有操作', '正在重生成模型。'].map((line) => (
            <div key={line} className="origin-left scale-x-[1.23]">
              {line}
            </div>
          ))}
        </div>
        <div className="flex w-[16px] flex-col items-center justify-between">
          <LunaArrow up />
          <LunaArrow />
        </div>
      </div>
      <div className="ml-[2px] flex h-[15px] w-[957px]">
        <div className="w-[876px] border-l border-black bg-white" />
        <div className="flex h-[14px] pl-[3px]">
          <ClassicButton className="w-[15px]">
            <LeftTri />
          </ClassicButton>
          <ClassicButton className="w-[16px]" />
          <div className="w-[15px] bg-[#f5f3ea]" />
          <ClassicButton className="w-[15px]">
            <RightTri />
          </ClassicButton>
        </div>
      </div>
      <div className="mt-[3px] h-[2px] border-t border-[#aca899] bg-white" />
    </div>
  );
}

const modes: [string, string][] = [
  ['捕捉', 'w-[34px]'],
  ['栅格', 'w-[34px]'],
  ['正交', 'w-[34px]'],
  ['极轴', 'w-[34px]'],
  ['对象捕捉', 'w-[62px]'],
  ['对象追踪', 'w-[62px]'],
  ['线宽', 'w-[33px]'],
];

function StatusBar() {
  return (
    <div className={clsx('flex h-[18px]', HEI)}>
      <div className="ml-[9px] h-[18px] w-[296px] border border-[#aca899] border-r-[#fbfaf4] text-[13px] leading-[17px] tracking-[0.22px] whitespace-pre text-[#aaa797]">
        -1.6626, 141.6217, 0.0000
      </div>
      <div className="ml-px flex text-[14.5px] leading-[18px] text-[#111]">
        {modes.map(([label, width]) => (
          <div
            key={label}
            className={clsx(
              'shrink-0 border-r border-[#b3b0a1] pl-[2px] tracking-[-0.1px] whitespace-nowrap',
              width,
            )}
          >
            {label}
          </div>
        ))}
        <div className="ml-px h-[18px] w-[34px] border border-black border-r-white bg-[#f3f1e6] pl-[1px] leading-[16px] whitespace-nowrap">
          模型
        </div>
      </div>
    </div>
  );
}

function DotGrip() {
  return <div className="h-[20px] w-[4px] border-x border-dotted border-[#123c9c]" />;
}

function Taskbar() {
  return (
    <div className="flex h-[33px] bg-linear-to-b from-[#4f8fe4] from-0% via-[#2560dc] via-20% to-[#245bd8] pt-[4px]">
      <div
        className={clsx(
          'flex w-[91px] items-center rounded-r-[9px] bg-linear-to-b from-[#5aa658] via-[#3c963c] to-[#348434] pl-[9px] text-[16px] text-[#f2f8ee] italic shadow-[1px_0_2px_#163c86]',
          HEI,
        )}
      >
        <svg width="17" height="17" viewBox="0 0 17 17" className="mr-[10px]">
          <path d="M2 2c2-1 4-1 6 0l-1 6c-2-1-4-1-6 0z" fill="#e5602c" />
          <path d="M9 3c2 1 4 1 7 0l-1 6c-2 1-5 1-7 0z" fill="#8fce48" />
          <path d="M1 9c2-1 4-1 6 0l-1 6c-2-1-4-1-6 0z" fill="#5c97ea" />
          <path d="M8 10c2 1 4 1 6 0l-1 6c-2 1-4 1-6 0z" fill="#f4cc38" />
        </svg>
        <span>开始</span>
      </div>
      <div className="flex flex-1 items-center pt-[1px] pl-[8px]">
        <DotGrip />
        <svg width="12" height="15" viewBox="0 0 12 15" className="ml-[9px]">
          <path d="M0 0h11v15h-11z" fill="#bcd5f4" />
          <path d="M2 3h7M2 6h7M2 9h7M2 12h7" stroke="#4a77bd" strokeWidth="1.5" strokeDasharray="2 .8" />
        </svg>
        <svg width="14" height="15" viewBox="0 0 14 15" className="ml-[8px]">
          <path d="M3 2l7-2 3 3-1 9-8 2-3-3z" fill="#d8e9fa" />
          <path d="M4.500 7.500h6c0-5-6-4-6 0c0 3 4 3 5.500 1" fill="none" stroke="#2472c8" strokeWidth="1.5" />
        </svg>
        <div className="ml-[8px]">
          <DotGrip />
        </div>
        <div
          className={clsx(
            'ml-[9px] flex h-[24px] w-[148px] items-center rounded-[2px] bg-[#1b4cb4] pl-[8px] text-[10.6px] whitespace-pre text-[#e6effc] shadow-[inset_1px_1px_1px_#123a92]',
            SONG,
          )}
        >
          <svg width="15" height="15" viewBox="0 0 15 15" className="mr-[4px]">
            <path d="M.5.5h14v14h-14z" fill="#0c5a78" stroke="#c8eaf4" />
            <path d="M4 4.5h6v7M10 7.5h-5v4h5" fill="none" stroke="#d8f4fa" strokeWidth="1.5" />
          </svg>
          <span className="tracking-[-0.6px]">AutoCAD 2002 - [...</span>
        </div>
        <div
          className={clsx(
            'ml-[2px] flex h-[24px] w-[148px] items-center rounded-[2px] bg-[#3b7df0] pl-[8px] text-[10.6px] whitespace-pre text-[#e6effc] shadow-[inset_1px_1px_1px_#6ba2f8]',
            SONG,
          )}
        >
          <svg width="15" height="15" viewBox="0 0 15 15" className="mr-[4px]">
            <path d="M3.5.5h8l3 3v11h-11z" fill="#fff" stroke="#555" />
            <path d="M.5 2.5h9v8h-9z" fill="#e8edfb" stroke="#16287c" />
            <path d="M2 4.5l1.5 4.5 1.5-4 1.5 4 1.5-4.5" fill="none" stroke="#16287c" strokeWidth="1.2" />
          </svg>
          <span className="tracking-[-0.6px]">文档 1 - Microso...</span>
        </div>
        <div className="mr-[9px] ml-auto">
          <DotGrip />
        </div>
        <svg width="12" height="10" viewBox="0 0 12 10" className="mr-[12px]">
          <path d="M0 2h12v8h-12z" fill="#111" />
          <path d="M1 4.5h10M1 7.5h10" stroke="#fff" strokeWidth="1.8" strokeDasharray="1.8 .5" />
          <path d="M6 2v-2" stroke="#111" />
        </svg>
      </div>
      <div className="flex w-[72px] items-center border-l border-[#0c3e98] bg-linear-to-b from-[#1c9df0] to-[#1592ea] pl-[9px] shadow-[inset_1px_1px_0_#4cc0fa]">
        <svg width="16" height="16" viewBox="0 0 16 16" className="mr-[8px]">
          <circle cx="6.5" cy="7" r="6" fill="#6f747e" />
          <circle cx="7" cy="6.5" r="4" fill="#d5d2cc" />
          <circle cx="7.5" cy="6.5" r="2.2" fill="#5d4c48" />
          <path d="M11 13c2-1 3-3 3-5M13 15c2-2 3-4 3-6" fill="none" stroke="#a8d8f8" />
        </svg>
        <span className={clsx('text-[11px] tracking-[-0.7px] text-white', SONG)}>8:51</span>
      </div>
    </div>
  );
}

function Field({ value, className }: { value: string; className?: string }) {
  return (
    <div
      className={clsx(
        'h-[26px] w-[58px] shrink-0 border-2 border-t-[#77746a] border-l-[#77746a] border-r-[#fbfaf4] border-b-[#fbfaf4] text-[13px] leading-[18px] font-bold tracking-[0.2px]',
        className ?? 'bg-white',
      )}
    >
      {value}
    </div>
  );
}

function Row({ label, unit, className, labelClass, unitClass, children }: {
  label: ReactNode;
  unit?: string;
  className: string;
  labelClass: string;
  unitClass: string;
  children: ReactNode;
}) {
  return (
    <div className={clsx('flex h-[26px] items-start', className)}>
      <div className={clsx('shrink-0 text-[14.8px] leading-[22px] whitespace-pre', labelClass)}>{label}</div>
      {children}
      <div className={clsx('text-[12px] leading-[18px] font-bold whitespace-nowrap', unitClass)}>{unit}</div>
    </div>
  );
}

const Sym = ({ children }: { children: string }) => (
  <span className="text-[13px] font-bold tracking-[-0.2px]">{children}</span>
);

function PushButton({ label, className }: { label: string; className: string }) {
  return (
    <button
      className={clsx(
        'block border border-t-[#fbfaf4] border-l-[#fbfaf4] border-r-2 border-b-2 border-r-[#85826f] border-b-[#85826f] bg-[#ece9d8] text-[14.5px] leading-[22px]',
        className,
      )}
    >
      {label}
    </button>
  );
}

function ParameterDialog() {
  return (
    <div
      className={clsx(
        'absolute top-[194px] left-[281px] h-[274px] w-[419px] rounded-t-[6px] bg-[#0a4fe0] px-[3px] pb-[3px] text-[#111]',
        HEI,
      )}
    >
      <div className="-mx-[3px] flex h-[28px] items-center rounded-t-[6px] bg-linear-to-b from-[#2a80f4] via-[#0556e8] to-[#0656ee] pt-[2px] pr-[4px] pl-[6px] shadow-[inset_0_-1px_1px_#0a48c8]">
        <div className="flex items-center text-[12px] font-bold tracking-[1px] text-white">
          双流道
          <span className="w-[31px] text-center text-[11px] font-normal tracking-[1.6px] text-[#8fb4f6]">-----</span>
          基本参数
        </div>
        <div className="ml-auto flex size-[20px] items-center justify-center rounded-[3px] border border-white bg-linear-to-br from-[#ec8a6c] to-[#cc3c1c]">
          <svg width="11" height="11" viewBox="0 0 11 11" stroke="#fff" strokeWidth="2">
            <path d="M1 1l9 9M10 1l-9 9" />
          </svg>
        </div>
      </div>
      <div className="h-[243px] bg-[#ece9d8] pt-[7px] pl-[1px]">
        <div className="flex gap-[3px]">
          <div className="h-[178px] w-[191px] border border-[#aca899] pl-[5px] shadow-[inset_1px_1px_0_#fff,1px_1px_0_#fff]">
            <Row className="mt-[11px]" label={<>流量<Sym>Q:</Sym></>} labelClass="w-[64px]" unit="(m^3/h)" unitClass="mt-[6px] ml-[7px]">
              <Field value="100" />
            </Row>
            <Row className="mt-[12px]" label={<>扬程<Sym>H:</Sym></>} labelClass="w-[64px]" unit="(m)" unitClass="mt-[6px] ml-[7px]">
              <Field value="15" />
            </Row>
            <Row className="mt-[12px]" label={<>转速<Sym>n:</Sym></>} labelClass="w-[64px]" unit="(r/min)" unitClass="mt-[6px] ml-[7px] tracking-[0.2px]">
              <Field value="1450" />
            </Row>
            <PushButton className="mt-[27px] ml-[37px] h-[27px] w-[117px]" label="参数计算:" />
          </div>
          <div className="h-[176px] w-[205px] border border-[#aca899] pl-[12px] shadow-[inset_1px_1px_0_#fff,1px_1px_0_#fff]">
            <Row className="mt-[7px]" label={<>比转数<Sym>ns:</Sym></>} labelClass="mt-[7px] w-[81px]" unitClass="">
              <Field value="115.7" className="bg-[#ece9d8]" />
            </Row>
            <Row className="mt-[17px]" label={<>密度:</>} labelClass="w-[81px] pl-[4px] mt-[3px]" unit="(kg/m^3)" unitClass="mt-[1px] ml-[1px]">
              <div className="h-[26px] w-[57px] shrink-0 border-2 border-t-[#77746a] border-l-[#77746a] border-r-[#fbfaf4] border-b-[#fbfaf4] bg-white pt-px pl-px text-[13px] leading-[16px] font-bold">
                <span className="block w-[8px] bg-[#44689c] text-white">1</span>
              </div>
            </Row>
            <Row className="mt-[10px]" label={<>效率 η :</>} labelClass="w-[79px] mt-[3px] pl-[2px]" unit="(%)" unitClass="mt-[2px] ml-[9px]">
              <Field value="71.78" />
            </Row>
            <Row className="mt-[10px]" label={<>功率 P :</>} labelClass="w-[79px] mt-[3px] pl-[2px]" unit="(kW)" unitClass="mt-[5px] ml-[9px]">
              <Field value="5.69" />
            </Row>
          </div>
        </div>
        <div className="mt-[17px] flex pl-[55px]">
          <PushButton className="h-[27px] w-[95px]" label="下一步" />
          <PushButton className="ml-[66px] h-[27px] w-[95px]" label="取消" />
        </div>
      </div>
    </div>
  );
}

export default function App() {
  return (
    <div className="relative h-[724px] w-[964px] overflow-hidden bg-white pt-[2px] pl-[2px]">
      <div className="h-[722px] bg-[#ece9d8]">
        <TitleBar />
        <MenuBar />
        <StandardToolbar />
        <PropertiesToolbar />
        <Workspace />
        <CommandWindow />
        <StatusBar />
        <Taskbar />
      </div>
      <ParameterDialog />
    </div>
  );
}
